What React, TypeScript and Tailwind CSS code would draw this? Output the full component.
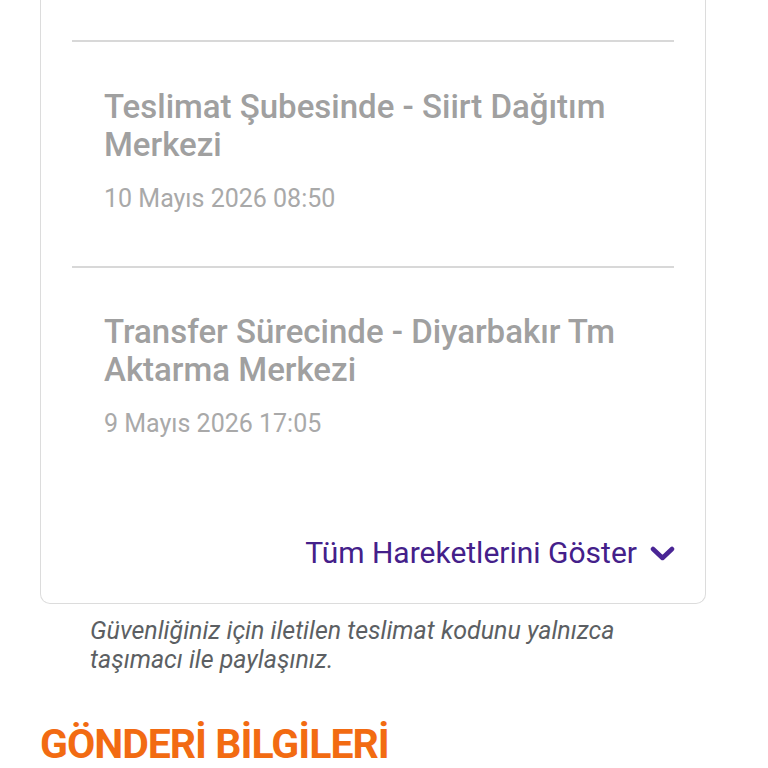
export default function App() {
  const events = [
    { title: "Teslimat Şubesinde - Siirt Dağıtım Merkezi", date: "10 Mayıs 2026 08:50" },
    { title: "Transfer Sürecinde - Diyarbakır Tm Aktarma Merkezi", date: "9 Mayıs 2026 17:05" },
  ];

  return (
    <div className="min-h-screen w-[768px] bg-white font-['Roboto',sans-serif] overflow-hidden">
      {/* Tracking card, top is scrolled off */}
      <div className="ml-[40px] w-[666px] border-x border-b border-[#dcdcdc] rounded-b-[10px] px-[31px]">
        <div className="h-[40px]" />
        {events.map((ev, i) => (
          <div key={i}>
            <div className="h-[2px] bg-[#d8d8d8]" />
            <div className={i === 0 ? "pl-[32px] pt-[46px] pb-[52px]" : "pl-[32px] pt-[45px]"}>
              <p className="text-[33px] leading-[38px] font-medium text-[#a0a0a0] pr-[20px]">{ev.title}</p>
              <p className="mt-[20px] text-[25px] leading-[30px] text-[#a9a9a9]">{ev.date}</p>
            </div>
          </div>
        ))}
        <div className="mt-[97px] pb-[33px] -mr-[1px] flex items-center justify-end gap-[13px]">
          <span className="text-[30px] leading-[34px] text-[#44208a]">Tüm Hareketlerini Göster</span>
          <svg width="25" height="16" viewBox="0 0 25 16" className="mt-[2px]">
            <path d="M3 3 L12.5 12 L22 3" fill="none" stroke="#4a2595" strokeWidth="4.5" strokeLinecap="round" strokeLinejoin="round" />
          </svg>
        </div>
      </div>

      {/* Security note */}
      <p className="ml-[90px] mt-[12px] w-[580px] text-[25px] leading-[29px] italic text-[#5c5f63]">
        Güvenliğiniz için iletilen teslimat kodunu yalnızca taşımacı ile paylaşınız.
      </p>

      {/* Section heading */}
      <h2 className="ml-[40px] mt-[48px] text-[41px] leading-[44px] font-bold tracking-[-1px] text-[#f26b12]">
        GÖNDERİ BİLGİLERİ
      </h2>
    </div>
  );
}
